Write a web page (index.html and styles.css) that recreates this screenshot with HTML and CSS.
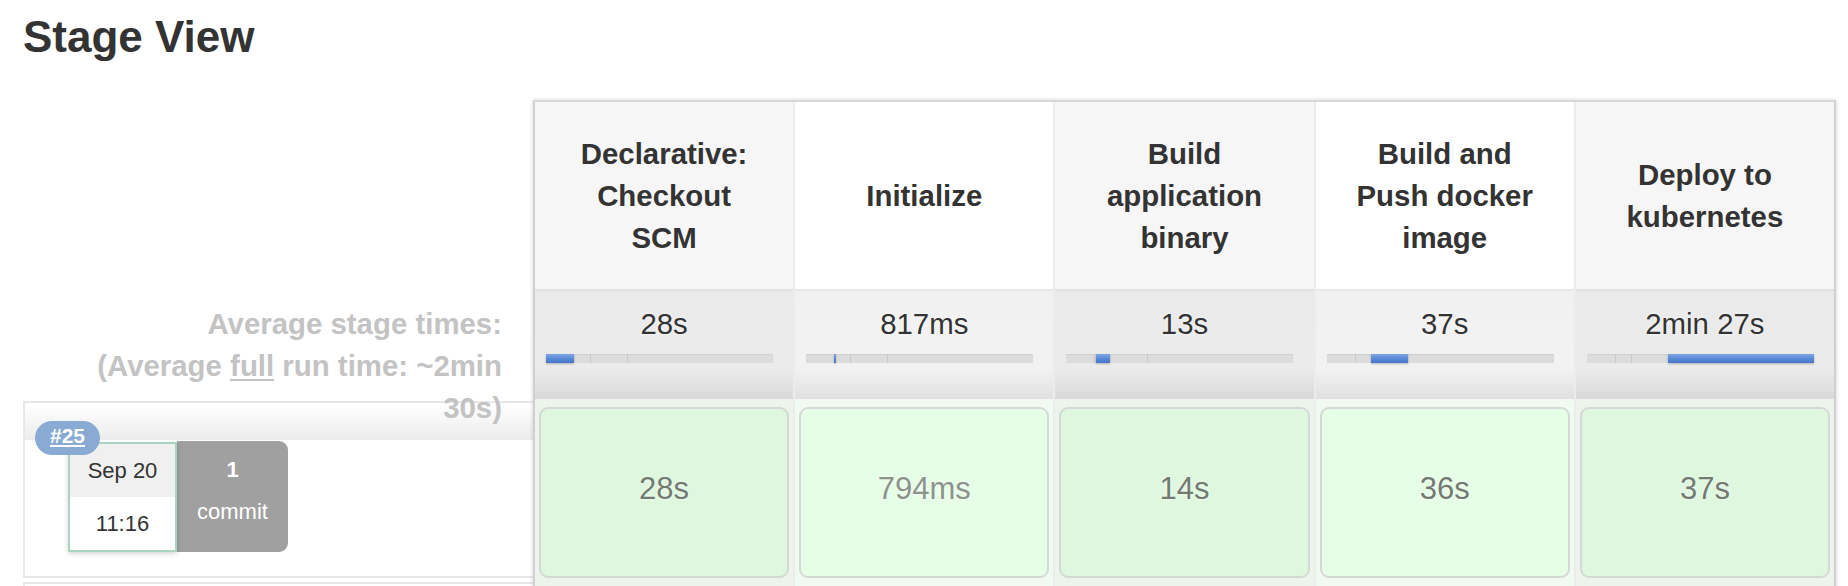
FILE: index.html
```html
<!DOCTYPE html>
<html lang="en">
<head>
<meta charset="utf-8">
<title>Stage View</title>
<link rel="stylesheet" href="styles.css">
</head>
<body>
<div class="page">
  <h2 class="title">Stage View</h2>
  <div class="view">
    <div class="side">
      <div class="side-head"></div>
      <div class="avg-label">
        <div>Average stage times:</div>
        <div>(Average <span class="full">full</span> run time: ~2min 30s)</div>
      </div>
      <div class="run-label">
        <div class="run-inner">
          <div class="date-box">
            <div class="date">Sep 20</div>
            <div class="time">11:16</div>
            <span class="badge">#25</span>
          </div>
          <div class="commit-box">
            <div class="commit-count">1</div>
            <div>commit</div>
          </div>
        </div>
      </div>
      <div class="run-label next"></div>
    </div>

    <div class="table">
      <div class="hcell odd">Declarative: Checkout SCM</div>
      <div class="hcell even">Initialize</div>
      <div class="hcell odd">Build application binary</div>
      <div class="hcell even">Build and Push docker image</div>
      <div class="hcell odd">Deploy to kubernetes</div>

      <div class="acell odd">
        <div class="avg">28s</div>
        <div class="bar"><span class="seg s1 on"></span><span class="seg s2"></span><span class="seg s3"></span><span class="seg s4"></span><span class="seg s5"></span></div>
      </div>
      <div class="acell even">
        <div class="avg">817ms</div>
        <div class="bar"><span class="seg s1"></span><span class="seg s2 on"></span><span class="seg s3"></span><span class="seg s4"></span><span class="seg s5"></span></div>
      </div>
      <div class="acell odd">
        <div class="avg">13s</div>
        <div class="bar"><span class="seg s1"></span><span class="seg s2"></span><span class="seg s3 on"></span><span class="seg s4"></span><span class="seg s5"></span></div>
      </div>
      <div class="acell even">
        <div class="avg">37s</div>
        <div class="bar"><span class="seg s1"></span><span class="seg s2"></span><span class="seg s3"></span><span class="seg s4 on"></span><span class="seg s5"></span></div>
      </div>
      <div class="acell odd">
        <div class="avg">2min 27s</div>
        <div class="bar"><span class="seg s1"></span><span class="seg s2"></span><span class="seg s3"></span><span class="seg s4"></span><span class="seg s5 on"></span></div>
      </div>

      <div class="rcell odd"><div class="box">28s</div></div>
      <div class="rcell even"><div class="box faint">794ms</div></div>
      <div class="rcell odd"><div class="box">14s</div></div>
      <div class="rcell even"><div class="box">36s</div></div>
      <div class="rcell odd"><div class="box">37s</div></div>
    </div>
  </div>
</div>
</body>
</html>
```
FILE: styles.css
```css
html, body {
  margin: 0;
  padding: 0;
  background: #fff;
}

body {
  font-family: "Liberation Sans", Arial, Helvetica, sans-serif;
  color: #333;
  overflow: hidden;
}

.page {
  padding: 13px 0 0 23px;
}

.title {
  margin: 0 0 39px;
  font-size: 44px;
  line-height: 48px;
  font-weight: bold;
  color: #333;
}

.view {
  display: flex;
  align-items: flex-start;
}

/* left column */
.side {
  flex: none;
  width: 510px;
}

.side-head {
  height: 189px;
}

.avg-label {
  position: relative;
  z-index: 2;
  height: 110px;
  box-sizing: border-box;
  padding: 14px 31px 0 39px;
  text-align: right;
  font-size: 29.4px;
  line-height: 42px;
  font-weight: bold;
  color: #c3c3c3;
}

.full {
  text-decoration: underline;
  text-underline-offset: 3px;
}

.run-label {
  margin-top: 2px;
  height: 177px;
  box-sizing: border-box;
  border: 2px solid #e7e7e7;
  border-right: 0;
  background: linear-gradient(to bottom, #ffffff 0, #ececec 37px, #ffffff 37px);
}

.run-label.next {
  margin-top: 4px;
  height: 40px;
  border-bottom: 0;
  background: #fff;
}

.run-inner {
  display: flex;
  align-items: flex-start;
  margin: 39px 0 0 43px;
}

.date-box {
  position: relative;
  width: 109px;
  height: 110px;
  box-sizing: border-box;
  border: 2px solid #a9d4bf;
  box-shadow: 0 2px 5px rgba(0, 0, 0, 0.16);
  font-size: 22px;
  text-align: center;
  color: #333;
  background: #fff;
}

.date {
  height: 53px;
  line-height: 53px;
  background: #f0f0f0;
}

.time {
  height: 53px;
  line-height: 53px;
  background: #fff;
}

.badge {
  position: absolute;
  left: -35px;
  top: -23px;
  width: 65px;
  height: 34px;
  border-radius: 17px;
  background: #88aad3;
  color: #fff;
  font-size: 21px;
  font-weight: bold;
  line-height: 30px;
  text-align: center;
  text-decoration: underline;
  text-underline-offset: 2px;
}

.commit-box {
  width: 111px;
  height: 111px;
  margin-top: -1px;
  box-sizing: border-box;
  padding-top: 8px;
  background: #a0a0a0;
  border-radius: 0 9px 9px 0;
  color: #fff;
  text-align: center;
  font-size: 22px;
  line-height: 42px;
}

.commit-count {
  font-weight: bold;
}

/* stage table */
.table {
  flex: none;
  width: 1303px;
  box-sizing: border-box;
  border: 2px solid #d0d0d0;
  border-top-color: #d8d8d8;
  border-bottom: 0;
  box-shadow: 0 0 4px rgba(0, 0, 0, 0.18);
  display: grid;
  grid-template-columns: repeat(5, 1fr);
  grid-template-rows: 187px 110px auto;
  column-gap: 2px;
  background: #ececec;
}

.hcell {
  display: flex;
  align-items: center;
  justify-content: center;
  padding: 0 29px;
  text-align: center;
  font-size: 29.4px;
  line-height: 42px;
  font-weight: bold;
  color: #333;
}

.hcell.odd { background: #f6f6f6; }
.hcell.even { background: #ffffff; }

.acell {
  padding-top: 14px;
  box-sizing: border-box;
}

.acell.odd {
  background: linear-gradient(to bottom, #dcdcdc 0, #eaeaea 3px, #ebebeb 80px, #d9d9d9 110px);
}

.acell.even {
  background: linear-gradient(to bottom, #e2e2e2 0, #f1f1f1 3px, #f2f2f2 80px, #e0e0e0 110px);
}

.avg {
  text-align: center;
  font-size: 29.4px;
  line-height: 42px;
  color: #333;
  text-shadow: 0 0 3px rgba(255, 255, 255, 0.9);
}

.bar {
  display: flex;
  width: 227px;
  height: 9px;
  margin: 9px 0 0 11px;
  background: #dcdcdc;
  box-shadow: inset 0 1px 1px rgba(0, 0, 0, 0.06);
}

.seg {
  flex: none;
  height: 100%;
  box-sizing: border-box;
}

.s1 { width: 28px; }
.s2 { width: 2px; border-left: 1px solid #c8c8c8; }
.s3 { width: 14px; }
.s4 { width: 37px; border-left: 1px solid #c8c8c8; }
.s5 { width: 146px; border-left: 1px solid #c8c8c8; }

.seg.on {
  border-left: 0;
  background: linear-gradient(to bottom, #7ea6e2 0, #5a8ad6 50%, #4577cc 100%);
  box-shadow: 0 1px 2px rgba(0, 0, 0, 0.25);
}

.rcell {
  padding: 8px 4px 12px;
}

.rcell.odd { background: #ecf4ec; }
.rcell.even { background: #f1faf1; }

.box {
  height: 171px;
  box-sizing: border-box;
  padding-bottom: 8px;
  display: flex;
  align-items: center;
  justify-content: center;
  border: 2px solid #d5d9d5;
  border-radius: 9px;
  font-size: 31px;
  color: #727b72;
  text-shadow: 0 0 3px rgba(255, 255, 255, 0.9);
}

.rcell.odd .box { background: #def7de; }
.rcell.even .box { background: #e5fee5; }

.box.faint {
  color: #8b948b;
}
```
